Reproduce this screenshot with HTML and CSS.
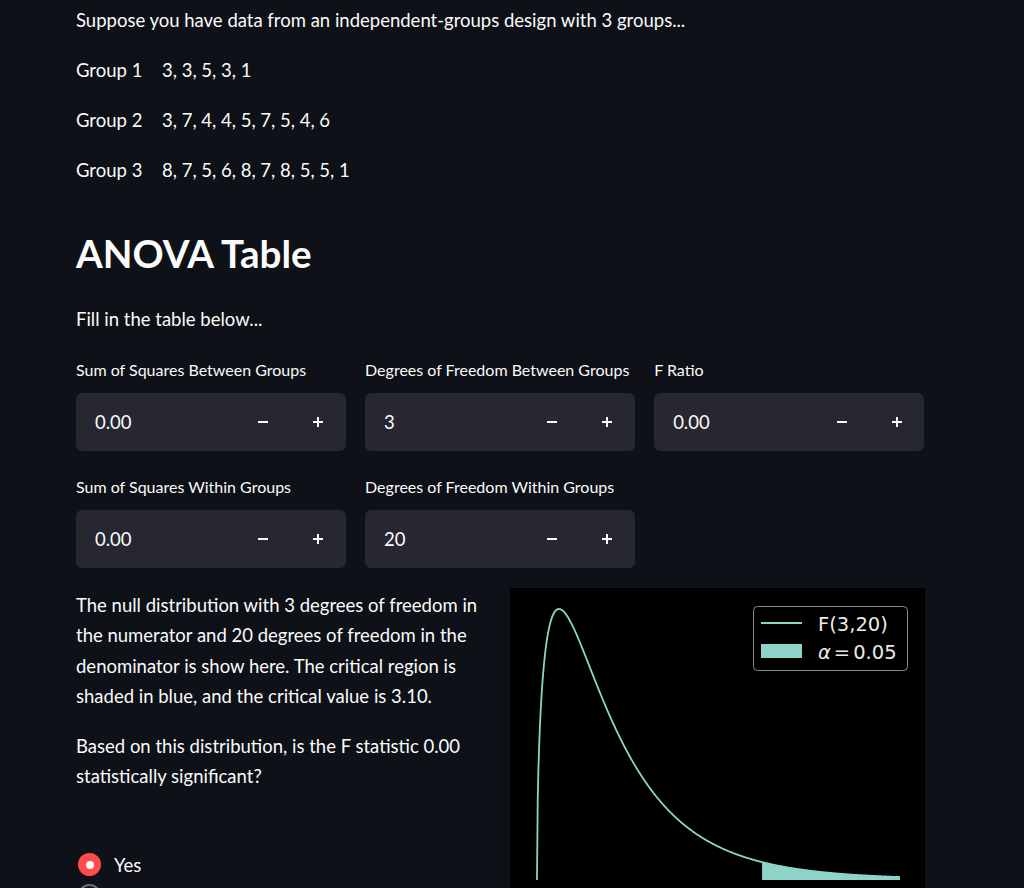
FILE: index.html
```
<!DOCTYPE html>
<html lang="en">
<head>
    <meta charset="UTF-8">
    <meta name="viewport" content="width=device-width, initial-scale=1.0">
    <title>ANOVA Practice</title>
    <link rel="stylesheet" href="styles.css">
</head>
<body>
    <main class="block">
        <p>Suppose you have data from an independent-groups design with 3 groups...</p>
        <p><span class="group-name">Group 1</span>3, 3, 5, 3, 1</p>
        <p><span class="group-name">Group 2</span>3, 7, 4, 4, 5, 7, 5, 4, 6</p>
        <p><span class="group-name">Group 3</span>8, 7, 5, 6, 8, 7, 8, 5, 5, 1</p>

        <h2>ANOVA Table</h2>
        <p>Fill in the table below...</p>

        <div class="row">
            <div class="field">
                <label for="ssb">Sum of Squares Between Groups</label>
                <div class="number-input">
                    <input type="text" id="ssb" value="0.00">
                    <button class="step" aria-label="Decrement"><svg width="12" height="12" viewBox="0 0 12 12"><path d="M1 6h10" stroke="#fafafa" stroke-width="2"/></svg></button>
                    <button class="step" aria-label="Increment"><svg width="12" height="12" viewBox="0 0 12 12"><path d="M1 6h10M6 1v10" stroke="#fafafa" stroke-width="2"/></svg></button>
                </div>
            </div>
            <div class="field">
                <label for="dfb">Degrees of Freedom Between Groups</label>
                <div class="number-input">
                    <input type="text" id="dfb" value="3">
                    <button class="step" aria-label="Decrement"><svg width="12" height="12" viewBox="0 0 12 12"><path d="M1 6h10" stroke="#fafafa" stroke-width="2"/></svg></button>
                    <button class="step" aria-label="Increment"><svg width="12" height="12" viewBox="0 0 12 12"><path d="M1 6h10M6 1v10" stroke="#fafafa" stroke-width="2"/></svg></button>
                </div>
            </div>
            <div class="field">
                <label for="fratio">F Ratio</label>
                <div class="number-input">
                    <input type="text" id="fratio" value="0.00">
                    <button class="step" aria-label="Decrement"><svg width="12" height="12" viewBox="0 0 12 12"><path d="M1 6h10" stroke="#fafafa" stroke-width="2"/></svg></button>
                    <button class="step" aria-label="Increment"><svg width="12" height="12" viewBox="0 0 12 12"><path d="M1 6h10M6 1v10" stroke="#fafafa" stroke-width="2"/></svg></button>
                </div>
            </div>
        </div>

        <div class="row">
            <div class="field">
                <label for="ssw">Sum of Squares Within Groups</label>
                <div class="number-input">
                    <input type="text" id="ssw" value="0.00">
                    <button class="step" aria-label="Decrement"><svg width="12" height="12" viewBox="0 0 12 12"><path d="M1 6h10" stroke="#fafafa" stroke-width="2"/></svg></button>
                    <button class="step" aria-label="Increment"><svg width="12" height="12" viewBox="0 0 12 12"><path d="M1 6h10M6 1v10" stroke="#fafafa" stroke-width="2"/></svg></button>
                </div>
            </div>
            <div class="field">
                <label for="dfw">Degrees of Freedom Within Groups</label>
                <div class="number-input">
                    <input type="text" id="dfw" value="20">
                    <button class="step" aria-label="Decrement"><svg width="12" height="12" viewBox="0 0 12 12"><path d="M1 6h10" stroke="#fafafa" stroke-width="2"/></svg></button>
                    <button class="step" aria-label="Increment"><svg width="12" height="12" viewBox="0 0 12 12"><path d="M1 6h10M6 1v10" stroke="#fafafa" stroke-width="2"/></svg></button>
                </div>
            </div>
            <div class="field"></div>
        </div>

        <div class="row two">
            <div class="col text-col">
                <p>The null distribution with 3 degrees of freedom in the numerator and 20 degrees of freedom in the denominator is show here. The critical region is shaded in blue, and the critical value is 3.10.</p>
                <p>Based on this distribution, is the F statistic 0.00 statistically significant?</p>
                <div class="radio-group">
                    <label class="radio"><span class="dot checked"></span>Yes</label>
                    <label class="radio"><span class="dot"></span>No</label>
                </div>
            </div>
            <div class="col">
                <svg class="chart" width="415" height="311" viewBox="0 0 415 311">
                    <rect width="415" height="311" fill="#000"/>
                    <path id="tail" fill="#8dd3c7"/>
                    <path id="curve" fill="none" stroke="#8dd3c7" stroke-width="1.8"/>
                    <rect x="243.5" y="18.5" width="154" height="64" rx="4" fill="#000" stroke="#8a8a8a" stroke-width="1"/>
                    <path d="M251 35h41" stroke="#8dd3c7" stroke-width="1.8"/>
                    <rect x="251" y="56" width="41" height="14" fill="#8dd3c7"/>
                    <text class="legend" x="308" y="42.5">F(3,20)</text>
                    <text class="legend" x="308" y="70.5"><tspan font-style="italic">α</tspan><tspan dx="3">=</tspan><tspan dx="3">0.05</tspan></text>
                </svg>
            </div>
        </div>
    </main>

    <script src="chart.js"></script>
</body>
</html>
```

FILE: styles.css
```
body {
    margin: 0;
    background-color: #0e1117;
    color: #fafafa;
    font-family: Lato, "Noto Sans", sans-serif;
    font-size: 18.5px;
    line-height: 30.4px;
}
.block {
    width: 848px;
    margin-left: 76px;
    padding-top: 5px;
}
p {
    margin: 0 0 19.6px;
}
.group-name {
    display: inline-block;
    width: 86px;
}
h2 {
    font-size: 38.6px;
    font-weight: 700;
    line-height: 1.2;
    margin: 45px 0 27px;
}
.row {
    display: grid;
    grid-template-columns: repeat(3, minmax(0, 1fr));
    gap: 19.2px;
    margin-bottom: 20px;
}
.row.two {
    grid-template-columns: repeat(2, minmax(0, 1fr));
}
.field {
    padding-top: 4px;
}
.field label {
    display: block;
    height: 24px;
    line-height: 24px;
    font-size: 16px;
    margin-bottom: 11px;
}
.number-input {
    display: flex;
    height: 58px;
    background-color: #262730;
    border-radius: 6px;
    overflow: hidden;
}
.number-input input {
    flex: 1;
    min-width: 0;
    border: none;
    background: transparent;
    color: #fafafa;
    font-family: inherit;
    font-size: 18.5px;
    padding: 0 19px;
    outline: none;
}
.step {
    width: 55px;
    border: none;
    background: transparent;
    display: flex;
    align-items: center;
    justify-content: center;
    padding: 0;
    cursor: pointer;
}
.text-col {
    padding-top: 2px;
}
.radio-group {
    padding-top: 38px;
}
.radio {
    display: flex;
    align-items: center;
    height: 31px;
    gap: 13px;
    padding-left: 2px;
}
.dot {
    width: 23px;
    height: 23px;
    box-sizing: border-box;
    border-radius: 50%;
    border: 2px solid #6c6e78;
    position: relative;
}
.dot.checked {
    border: none;
    background-color: #ff4b4b;
}
.dot.checked::after {
    content: "";
    position: absolute;
    left: 7.5px;
    top: 7.5px;
    width: 8px;
    height: 8px;
    border-radius: 50%;
    background: #fafafa;
}
.chart {
    display: block;
}
.legend {
    font-family: "DejaVu Sans", sans-serif;
    font-size: 19.5px;
    fill: #ebebeb;
}
```

FILE: chart.js
```
// F(3,20) density, drawn on the same pixel grid as the figure
const d1 = 3, d2 = 20;
const x0 = 27, xScale = 72.6, base = 292, peakY = 21;

function logPdf(x) {
    return 0.5 * (d1 * Math.log(d1 * x) + d2 * Math.log(d2) - (d1 + d2) * Math.log(d1 * x + d2)) - Math.log(x);
}

const mode = (d1 - 2) / d1 * d2 / (d2 + 2);
const peak = logPdf(mode);

function px(x) { return x0 + x * xScale; }
function py(x) {
    if (x <= 0) return base;
    return base - Math.exp(logPdf(x) - peak) * (base - peakY);
}

let d = '';
for (let i = 0; i <= 500; i++) {
    const x = 5 * i / 500;
    d += (i ? 'L' : 'M') + px(x).toFixed(2) + ' ' + py(x).toFixed(2);
}
document.getElementById('curve').setAttribute('d', d);

// critical region above 3.10
const crit = 3.10;
let t = 'M' + px(crit).toFixed(2) + ' ' + base;
for (let i = 0; i <= 100; i++) {
    const x = crit + (5 - crit) * i / 100;
    t += 'L' + px(x).toFixed(2) + ' ' + py(x).toFixed(2);
}
t += 'L' + px(5).toFixed(2) + ' ' + base + 'Z';
document.getElementById('tail').setAttribute('d', t);
```
